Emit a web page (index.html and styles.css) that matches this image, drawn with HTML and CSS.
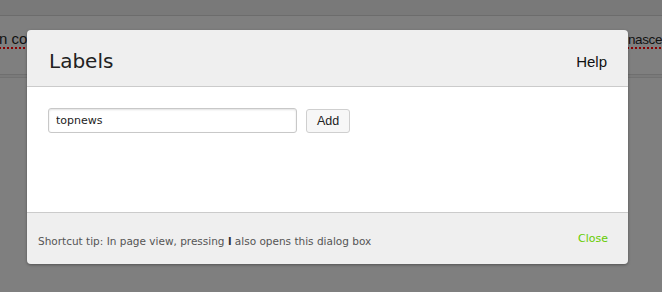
FILE: index.html
```html
<!DOCTYPE html>
<html lang="en">
<head>
  <meta charset="UTF-8">
  <title>Labels</title>
  <link rel="stylesheet" href="styles.css">
</head>
<body>
  <div class="page">
    <div class="topbar"></div>
    <div class="doc-line">
      <span class="word">n con</span>
      <span class="word right">nasce</span>
    </div>
    <div class="rule"></div>
  </div>

  <div class="dialog">
    <div class="dialog-header">
      <h2>Labels</h2>
      <a href="#" class="help">Help</a>
    </div>
    <div class="dialog-body">
      <form class="label-form">
        <input type="text" class="label-input" value="topnews">
        <button type="button" class="add-btn">Add</button>
      </form>
    </div>
    <div class="dialog-footer">
      <p>Shortcut tip: In page view, pressing <b>l</b> also opens this dialog box</p>
      <a href="#" class="close">Close</a>
    </div>
  </div>
</body>
</html>
```

FILE: styles.css
```css
* {
    box-sizing: border-box;
}

body {
    margin: 0;
    padding: 0;
    background-color: #7f7f7f;
    font-family: "DejaVu Sans", Verdana, sans-serif;
    height: 292px;
    overflow: hidden;
}

.page {
    width: 662px;
}

.topbar {
    height: 16px;
    background-color: #797979;
    border-bottom: 1px solid #6c6c6c;
}

.doc-line {
    display: flex;
    justify-content: space-between;
    align-items: baseline;
    height: 58px;
    padding-top: 14px;
    font-family: "Liberation Sans", Arial, sans-serif;
    font-size: 15px;
    color: #111;
}

.word {
    white-space: nowrap;
    text-decoration: underline dotted #8a0000;
    text-decoration-thickness: 2px;
    text-underline-offset: 3px;
}

.doc-line .word:first-child {
    margin-left: -1px;
}

.right {
    font-size: 13.5px;
    letter-spacing: -0.4px;
}

.rule {
    height: 4px;
    border-top: 1px solid #6f6f6f;
    border-bottom: 1px solid #727272;
    background-color: #7a7a7a;
}

.dialog {
    position: absolute;
    left: 27px;
    top: 30px;
    width: 601px;
    border-radius: 4px;
    overflow: hidden;
    box-shadow: 0 1px 3px rgba(0, 0, 0, 0.35);
}

.dialog-header {
    display: flex;
    justify-content: space-between;
    align-items: center;
    height: 57px;
    padding: 0 21px 0 22px;
    background-color: #efefef;
    border-bottom: 1px solid #cbcbcb;
}

.dialog-header h2 {
    margin: 5px 0 0;
    font-size: 20px;
    font-weight: normal;
    color: #222;
}

.help {
    font-family: "Liberation Sans", Arial, sans-serif;
    font-size: 15px;
    color: #111;
    text-decoration: none;
    margin-top: 6px;
}

.dialog-body {
    height: 125px;
    background-color: #fff;
    padding: 20px 21px;
}

.label-form {
    display: flex;
    align-items: center;
    gap: 9px;
}

.label-input {
    width: 249px;
    height: 25px;
    padding: 0 7px;
    border: 1px solid #c8c8c8;
    border-radius: 3px;
    box-shadow: inset 0 1px 2px rgba(0, 0, 0, 0.12);
    font-family: "DejaVu Sans", Verdana, sans-serif;
    font-size: 11px;
    color: #222;
}

.add-btn {
    height: 24px;
    padding: 0 10px;
    margin-top: 2px;
    border: 1px solid #cfcfcf;
    border-radius: 3px;
    background-color: #f7f7f7;
    font-family: "Liberation Sans", Arial, sans-serif;
    font-size: 12.5px;
    color: #222;
}

.dialog-footer {
    display: flex;
    justify-content: space-between;
    align-items: center;
    height: 52px;
    padding: 0 20px 0 11px;
    background-color: #efefef;
    border-top: 1px solid #cbcbcb;
}

.dialog-footer p {
    margin: 4px 0 0;
    font-size: 10.5px;
    color: #555;
}

.dialog-footer b {
    color: #333;
}

.close {
    font-size: 11px;
    color: #66cc00;
    text-decoration: none;
}
```
